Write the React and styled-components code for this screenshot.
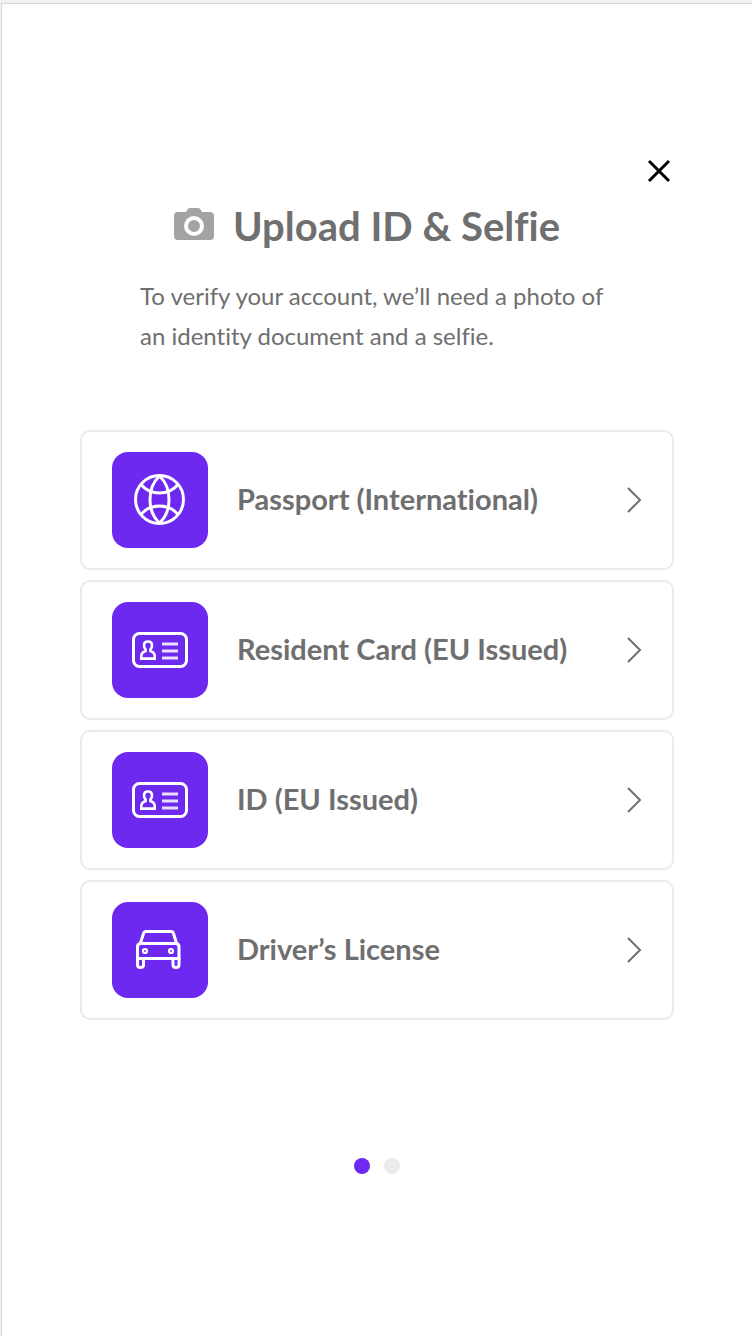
import styled, { createGlobalStyle } from "styled-components";

const GlobalStyle = createGlobalStyle`
  * {
    box-sizing: border-box;
  }
  body {
    margin: 0;
    background: #f1f1f1;
    color: #6f6f6f;
    font-family: Lato, "Open Sans", sans-serif;
    font-variant-ligatures: none;
  }
`;

const Page = styled.div`
  min-height: 100vh;
  padding: 3px 0 0 1px;
  display: flex;
`;

const Sheet = styled.main`
  flex: 1;
  display: flex;
  flex-direction: column;
  padding: 144px 78px;
  background: #fff;
  border-top: 1px solid #d6d6d6;
  border-left: 1px solid #d6d6d6;
`;

const CloseButton = styled.button`
  align-self: flex-end;
  display: flex;
  padding: 8px 0;
  margin-bottom: 6px;
  border: 0;
  background: none;
  color: #000;
  cursor: pointer;
`;

const Header = styled.header`
  padding: 0 60px;
`;

const Title = styled.h1`
  display: flex;
  align-items: center;
  gap: 19px;
  margin: 0 0 24px;
  padding-left: 34px;
  font-size: 40px;
  line-height: 52px;
  white-space: nowrap;
`;

const Camera = styled.svg`
  flex: none;
  margin-bottom: 4px;
`;

const Intro = styled.p`
  margin: 0;
  font-size: 24px;
  line-height: 40px;
`;

const List = styled.ul`
  display: flex;
  flex-direction: column;
  gap: 10px;
  margin: 74px 0 138px;
  padding: 0;
  list-style: none;
`;

const Option = styled.button`
  display: flex;
  align-items: center;
  gap: 29px;
  width: 100%;
  padding: 20px 30px;
  border: 2px solid #ebebeb;
  border-radius: 10px;
  background: #fff;
  color: inherit;
  font: inherit;
  font-size: 29px;
  font-weight: bold;
  text-align: left;
  cursor: pointer;
  &:hover {
    border-color: #6e29f0;
  }
`;

const Tile = styled.span`
  display: flex;
  flex: none;
  border-radius: 16px;
  background: #6e29f0;
`;

const Label = styled.span`
  flex: 1;
  padding-bottom: 4px;
`;

const Dots = styled.nav`
  display: flex;
  justify-content: center;
  gap: 14px;
`;

const Dot = styled.button`
  width: 16px;
  height: 16px;
  padding: 0;
  border: 0;
  border-radius: 50%;
  background: ${({ $active }) => ($active ? "#6e29f0" : "#ebebeb")};
  cursor: pointer;
`;

const TileSvg = ({ children }) => (
  <svg width="96" height="96" viewBox="0 0 96 96" fill="none" stroke="#fff" strokeWidth="3" aria-hidden="true">
    {children}
  </svg>
);

const GlobeIcon = () => (
  <TileSvg>
    <circle cx="47.5" cy="47.5" r="24" />
    <path d="M47.5 24C41 30 38 38 38 47.5S41 65 47.5 71C54 65 57 57 57 47.5S54 30 47.5 24Z" />
    <path d="M29 32.5C34 38.5 40 41 47.5 41S61 38.5 66 32.5M29 62.5C34 56.5 40 54 47.5 54S61 56.5 66 62.5" />
  </TileSvg>
);

const CardIcon = () => (
  <TileSvg>
    <rect x="21.5" y="31.5" width="53" height="33" rx="6" />
    <path
      strokeWidth="2.6"
      d="M29.3 56.6H42.7V54Q42.7 50.5 38.4 49V47.5Q40 46 40 43.5Q40 39.5 36 39.5T32 43.5Q32 46 33.600 47.5V49Q29.3 50.5 29.3 54Z"
    />
    <path d="M50 42H66M50 49H66M50 56H66" strokeOpacity="0.85" />
  </TileSvg>
);

const CarIcon = () => (
  <TileSvg>
    <path d="M28.5 41L31.5 31.5Q32.2 29.5 34 29.5H59Q61 29.5 61.5 31.5L64.5 41" />
    <path d="M25.5 56.5V45Q25.5 41.5 29 41.5H63.5Q67 41.5 67 45V56.5Z" />
    <path d="M25.5 56V63Q25.5 65.5 28.5 65.5T31.5 63V57M61 57V63Q61 65.5 64 65.5T67 63V56" />
    <circle cx="33" cy="49" r="2" strokeWidth="2.2" />
    <circle cx="59" cy="49" r="2" strokeWidth="2.2" />
  </TileSvg>
);

const CameraIcon = () => (
  <Camera width="40" height="32" viewBox="0 0 40 32" aria-hidden="true">
    <path
      fill="#a3a3a3"
      d="M4 4H12L13.5 1.5Q14.2 0 16 0H24Q25.8 0 26.5 1.5L28 4H36Q40 4 40 8V28Q40 32 36 32H4Q0 32 0 28V8Q0 4 4 4Z"
    />
    <circle cx="20" cy="18" r="8" fill="#a3a3a3" stroke="#fff" strokeWidth="4" />
  </Camera>
);

const ChevronIcon = () => (
  <svg width="16" height="26" viewBox="0 0 16 26" fill="none" stroke="#6f6f6f" strokeWidth="2" aria-hidden="true">
    <path d="M2 1L14 13L2 25" />
  </svg>
);

const documents = [
  { label: "Passport (International)", Icon: GlobeIcon },
  { label: "Resident Card (EU Issued)", Icon: CardIcon },
  { label: "ID (EU Issued)", Icon: CardIcon },
  { label: "Driver’s License", Icon: CarIcon },
];

const App = () => {
  return (
    <Page>
      <GlobalStyle />
      <Sheet>
        <CloseButton type="button" aria-label="Close">
          <svg width="30" height="30" viewBox="0 0 30 30" stroke="#000" strokeWidth="3" aria-hidden="true">
            <path d="M5 5L25 25M25 5L5 25" />
          </svg>
        </CloseButton>
        <Header>
          <Title>
            <CameraIcon />
            Upload ID &amp; Selfie
          </Title>
          <Intro>To verify your account, we’ll need a photo of an identity document and a selfie.</Intro>
        </Header>
        <List>
          {documents.map(({ label, Icon }) => (
            <li key={label}>
              <Option type="button">
                <Tile>
                  <Icon />
                </Tile>
                <Label>{label}</Label>
                <ChevronIcon />
              </Option>
            </li>
          ))}
        </List>
        <Dots aria-label="Steps">
          <Dot type="button" $active aria-label="Step 1" aria-current="step" />
          <Dot type="button" aria-label="Step 2" />
        </Dots>
      </Sheet>
    </Page>
  );
};

export default App;
